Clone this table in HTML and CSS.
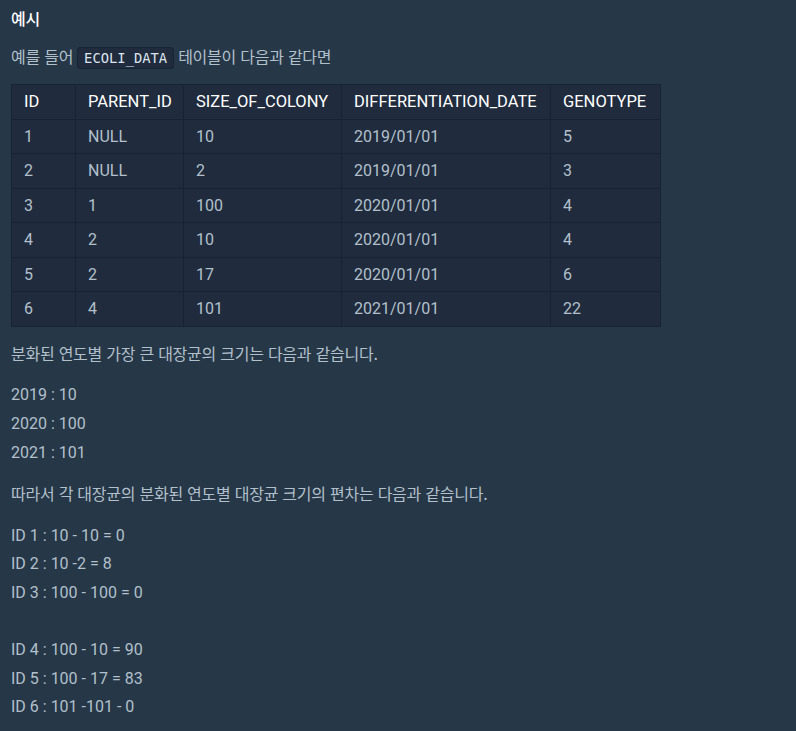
FILE: index.html
```html
<!DOCTYPE html>
<html lang="ko">
<head>
<meta charset="utf-8">
<link rel="stylesheet" href="styles.css">
</head>
<body>
<div class="content">
  <h5 class="title"><span class="ko">예시</span></h5>
  <p><span class="ko">예를 들어</span> <code>ECOLI_DATA</code> <span class="ko">테이블이 다음과 같다면</span></p>
  <table class="data">
    <colgroup>
      <col class="c1"><col class="c2"><col class="c3"><col class="c4"><col class="c5">
    </colgroup>
    <thead>
      <tr><th>ID</th><th>PARENT_ID</th><th>SIZE_OF_COLONY</th><th>DIFFERENTIATION_DATE</th><th>GENOTYPE</th></tr>
    </thead>
    <tbody>
      <tr><td>1</td><td>NULL</td><td>10</td><td>2019/01/01</td><td>5</td></tr>
      <tr><td>2</td><td>NULL</td><td>2</td><td>2019/01/01</td><td>3</td></tr>
      <tr><td>3</td><td>1</td><td>100</td><td>2020/01/01</td><td>4</td></tr>
      <tr><td>4</td><td>2</td><td>10</td><td>2020/01/01</td><td>4</td></tr>
      <tr><td>5</td><td>2</td><td>17</td><td>2020/01/01</td><td>6</td></tr>
      <tr><td>6</td><td>4</td><td>101</td><td>2021/01/01</td><td>22</td></tr>
    </tbody>
  </table>
  <p><span class="ko">분화된 연도별 가장 큰 대장균의 크기는 다음과 같습니다.</span></p>
  <p>2019 : 10<br>2020 : 100<br>2021 : 101</p>
  <p><span class="ko">따라서 각 대장균의 분화된 연도별 대장균 크기의 편차는 다음과 같습니다.</span></p>
  <p>ID 1 : 10 - 10 = 0<br>ID 2 : 10 -2 = 8<br>ID 3 : 100 - 100 = 0<br><br>ID 4 : 100 - 10 = 90<br>ID 5 : 100 - 17 = 83<br>ID 6 : 101 -101 - 0</p>
</div>
</body>
</html>
```

FILE: styles.css
```css
html, body {
  margin: 0;
  padding: 0;
  background: #263747;
}

body {
  font-family: Roboto, "Noto Sans CJK KR", sans-serif;
  font-size: 16px;
  color: #b2c0cc;
}

.content {
  padding: 4px 11px 0 11px;
}

.ko {
  font-family: "Noto Sans CJK KR", sans-serif;
  font-size: 16px;
  letter-spacing: -0.25px;
}

.title {
  margin: 0 0 7px 0;
  font-size: 16px;
  line-height: 28.8px;
  color: #ffffff;
  font-weight: 500;
}

p {
  margin: 0 0 12px 0;
  line-height: 28.6px;
}

code {
  font-family: "DejaVu Sans Mono", "Liberation Mono", monospace;
  font-size: 13.8px;
  color: #dbe4ee;
  background: #202b3d;
  border: 1px solid #172334;
  border-radius: 4px;
  padding: 2px 6px;
}

.data {
  border-collapse: collapse;
  table-layout: fixed;
  width: 650px;
  background: #202b3d;
  margin: 0 0 12px 0;
}

.c1 { width: 64px; }
.c2 { width: 108px; }
.c3 { width: 158px; }
.c4 { width: 209px; }
.c5 { width: 110px; }

.data th,
.data td {
  border: 1px solid #172334;
  padding: 5px 12px;
  line-height: 23.5px;
  text-align: left;
  white-space: nowrap;
}

.data th {
  color: #ffffff;
  font-weight: 400;
  font-size: 16.5px;
}

.data td {
  color: #b2c0cc;
}
```
